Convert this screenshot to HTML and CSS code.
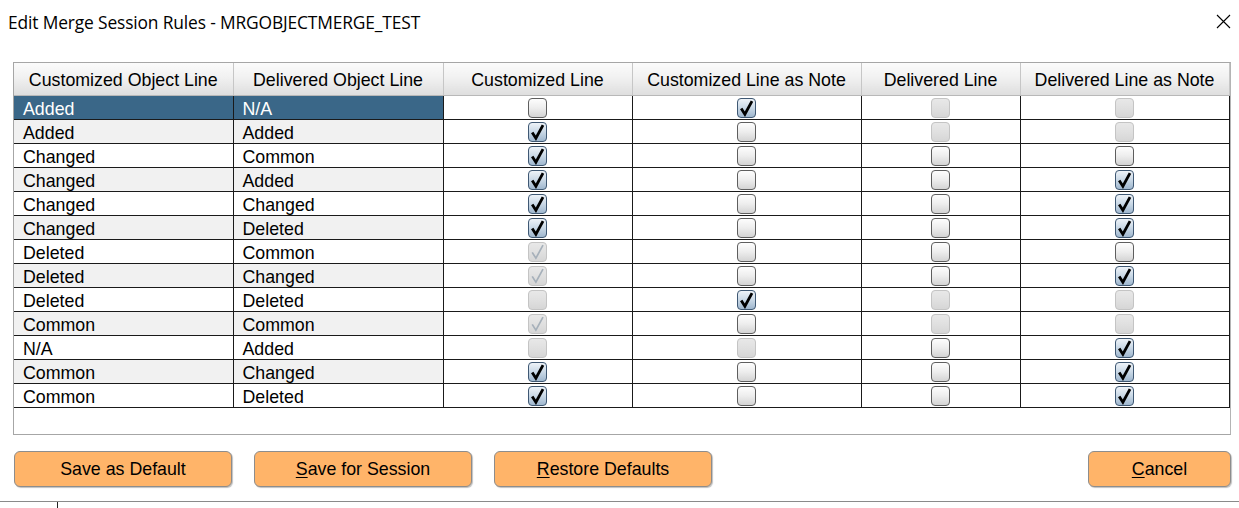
FILE: index.html
```html
<!DOCTYPE html>
<html>
<head>
<meta charset="utf-8">
<link rel="stylesheet" href="styles.css">
</head>
<body>
<div class="dialog">
  <div class="titlebar">
    <span class="title">Edit Merge Session Rules - MRGOBJECTMERGE_TEST</span>
    <svg class="close" width="15" height="15" viewBox="0 0 15 15"><path d="M1 1 L14 14 M14 1 L1 14" stroke="#000" stroke-width="1.1" fill="none"/></svg>
  </div>
  <div class="frame">
    <table class="grid">
      <colgroup>
        <col style="width:219px"><col style="width:210px"><col style="width:189px"><col style="width:229px"><col style="width:159px"><col style="width:209px">
      </colgroup>
      <thead>
        <tr>
          <th>Customized Object Line</th>
          <th>Delivered Object Line</th>
          <th>Customized Line</th>
          <th>Customized Line as Note</th>
          <th>Delivered Line</th>
          <th>Delivered Line as Note</th>
        </tr>
      </thead>
      <tbody id="rows"></tbody>
    </table>
  </div>
  <div class="buttons">
    <button class="btn">Save as Default</button>
    <button class="btn"><u>S</u>ave for Session</button>
    <button class="btn"><u>R</u>estore Defaults</button>
    <button class="btn cancel"><u>C</u>ancel</button>
  </div>
  <div class="bottom"><span class="tick"></span></div>
</div>
<script>
var data = [
  ["Added","N/A","u","c","d","d"],
  ["Added","Added","c","u","d","d"],
  ["Changed","Common","c","u","u","u"],
  ["Changed","Added","c","u","u","c"],
  ["Changed","Changed","c","u","u","c"],
  ["Changed","Deleted","c","u","u","c"],
  ["Deleted","Common","dc","u","u","u"],
  ["Deleted","Changed","dc","u","u","c"],
  ["Deleted","Deleted","d","c","d","d"],
  ["Common","Common","dc","u","d","d"],
  ["N/A","Added","d","d","u","c"],
  ["Common","Changed","c","u","u","c"],
  ["Common","Deleted","c","u","u","c"]
];
var check = '<svg width="17" height="18" viewBox="0 0 17 18"><path d="M3.2 9.4 L6.9 15.2 L14 2.2" fill="none" stroke-width="2.8" stroke-linejoin="miter" stroke-linecap="butt"/></svg>';
var html = "";
data.forEach(function(r, i){
  var cls = i === 0 ? "sel" : (i % 2 === 1 ? "alt" : "");
  html += '<tr class="' + cls + '"><td class="txt">' + r[0] + '</td><td class="txt">' + r[1] + '</td>';
  for (var k = 2; k < 6; k++) {
    var s = r[k];
    var c = s === "c" ? "cb on" : s === "u" ? "cb" : s === "d" ? "cb dis" : "cb dis on";
    html += '<td class="chk"><span class="' + c + '">' + (s === "c" || s === "dc" ? check : "") + '</span></td>';
  }
  html += "</tr>";
});
document.getElementById("rows").innerHTML = html;
</script>
</body>
</html>
```

FILE: styles.css
```css
html, body {
  margin: 0;
  padding: 0;
  background: #fff;
}
.dialog {
  width: 1239px;
  height: 508px;
  display: flex;
  flex-direction: column;
  font-family: "Liberation Sans", Arial, sans-serif;
  color: #000;
  overflow: hidden;
}
.titlebar {
  height: 44px;
  display: flex;
  align-items: center;
  justify-content: space-between;
  padding: 0 8px 0 8px;
}
.title {
  font-family: "Open Sans", "Noto Sans", sans-serif;
  font-size: 17.4px;
  letter-spacing: -0.15px;
  margin-top: 1px;
}
.close {
  margin-top: 0;
}
.frame {
  margin: 18px 8px 0 13px;
  height: 374px;
  border: 1px solid #a6a6a6;
  border-right-color: #b4b4b4;
  box-sizing: border-box;
}
.grid {
  border-collapse: collapse;
  table-layout: fixed;
  width: 1215px;
  font-size: 17.8px;
}
.grid th {
  height: 33px;
  padding: 2px 0 0 0;
  font-weight: normal;
  background: linear-gradient(#fbfbfb, #f1f1f1 45%, #dedede);
  border-right: 1px solid #c6c6c6;
  border-bottom: 1px solid #b8b8b8;
  box-sizing: border-box;
  text-align: center;
  white-space: nowrap;
}
.grid tbody tr {
  height: 24px;
}
.grid td {
  padding: 0;
  height: 23px;
  border-right: 1px solid #1a1a1a;
  border-bottom: 1px solid #1a1a1a;
  box-sizing: content-box;
  white-space: nowrap;
  overflow: hidden;
}
.grid td.txt {
  padding-left: 9px;
  padding-top: 3px;
  height: 20px;
  line-height: 20px;
  vertical-align: top;
}
.grid tr.alt td.txt {
  background: #f1f1f1;
}
.grid tr.sel td.txt {
  background: #3a6788;
  color: #fff;
}
.grid td.chk {
  vertical-align: middle;
  line-height: 0;
}
.cb {
  display: block;
  margin: 0 auto;
  width: 19px;
  height: 20px;
  box-sizing: border-box;
  border: 1px solid #5e5e5e;
  border-radius: 4px;
  background: linear-gradient(#fdfdfd, #ededed 50%, #d4d4d4);
}
.cb svg {
  display: block;
  margin: 0;
}
.cb svg path {
  stroke: #000;
}
.cb.on {
  border-color: #3f5873;
  background: linear-gradient(#eef3f8, #c9d8e6 50%, #9fb7ce);
}
.cb.dis {
  border-color: #c4c4c4;
  background: linear-gradient(#e8e8e8, #e0e0e0 50%, #d6d6d6);
}
.cb.dis svg path {
  stroke: #a6b0ba;
  stroke-width: 1.7;
}
.buttons {
  display: flex;
  gap: 22px;
  padding: 16px 8px 0 14px;
}
.btn {
  width: 218px;
  height: 36px;
  background: #ffb469;
  border: 1px solid #8d8d8d;
  border-radius: 6px;
  box-shadow: 1px 1px 1px rgba(0, 0, 0, 0.25);
  font-family: "Liberation Sans", Arial, sans-serif;
  font-size: 17.8px;
  color: #000;
  padding: 0;
  text-align: center;
}
.btn u {
  text-decoration-thickness: 1px;
  text-underline-offset: 2px;
}
.btn.cancel {
  width: 143px;
  margin-left: auto;
}
.bottom {
  margin-top: 14px;
  height: 6px;
  border-top: 1px solid #8a8a8a;
  position: relative;
}
.tick {
  position: absolute;
  left: 57px;
  top: 0;
  width: 1px;
  height: 6px;
  background: #222;
}
```
